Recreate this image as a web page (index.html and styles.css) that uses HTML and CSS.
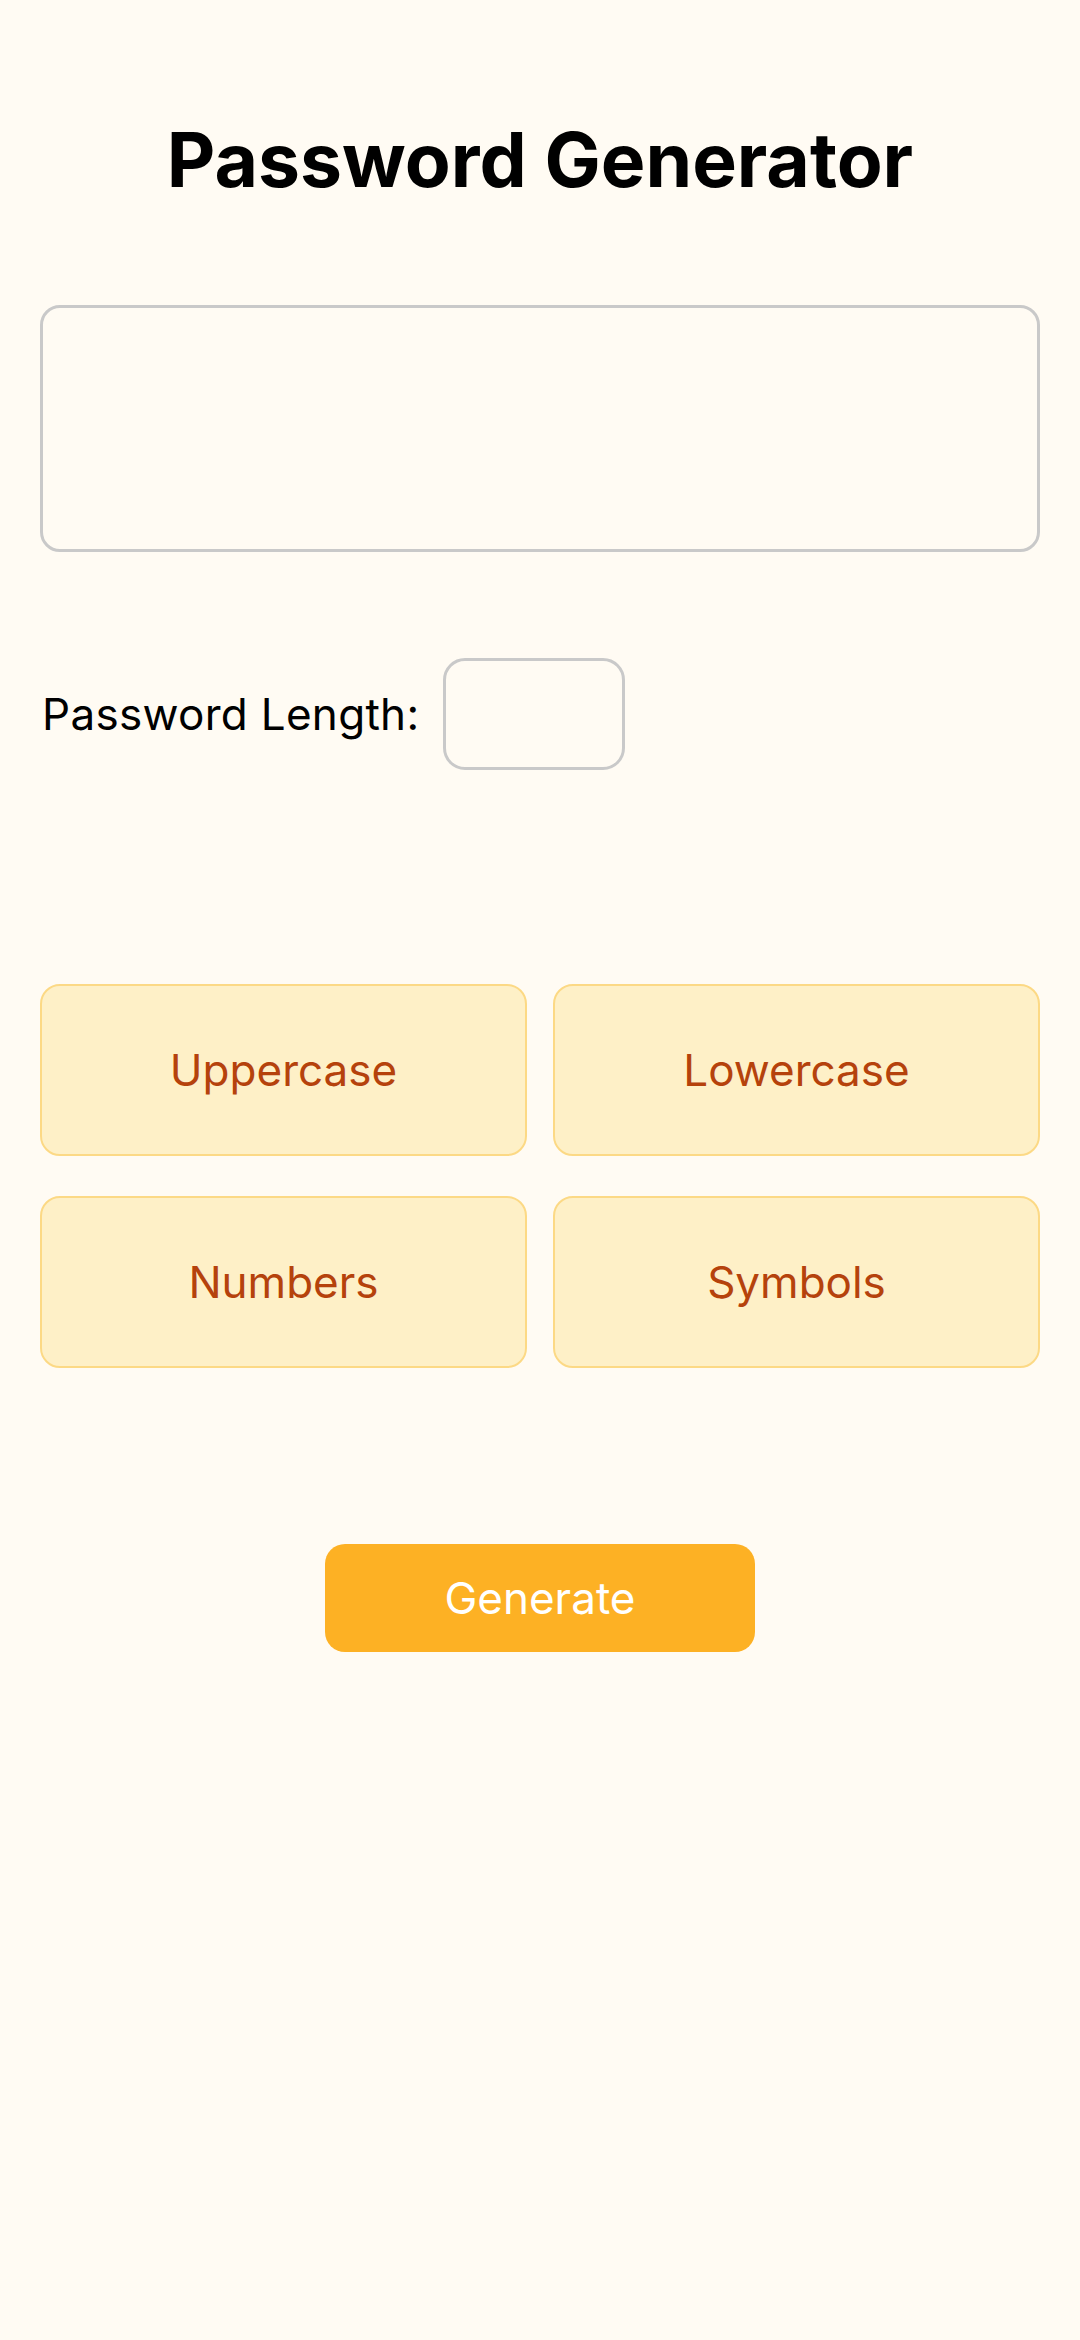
FILE: index.html
```html
<!DOCTYPE html>
<html lang="en">
<head>
<meta charset="utf-8">
<title>Password Generator</title>
<link rel="stylesheet" href="styles.css">
</head>
<body>
<main class="app">
  <h1 class="title">Password Generator</h1>
  <textarea class="output" readonly></textarea>
  <div class="length-row">
    <label class="length-label" for="len">Password Length:</label>
    <input class="length-input" id="len" type="text">
  </div>
  <div class="options">
    <button class="option">Uppercase</button>
    <button class="option">Lowercase</button>
    <button class="option">Numbers</button>
    <button class="option">Symbols</button>
  </div>
  <div class="actions">
    <button class="generate">Generate</button>
  </div>
</main>
</body>
</html>
```

FILE: styles.css
```css
html, body {
  margin: 0;
  padding: 0;
  background: #fffbf3;
}
body {
  font-family: Inter, "Noto Sans", Roboto, sans-serif;
  color: #000;
}
.app {
  padding: 0 40px;
  display: flex;
  flex-direction: column;
}
.title {
  margin: 115px 0 0;
  font-size: 75px;
  line-height: 90px;
  font-weight: 700;
  text-align: center;
  letter-spacing: 0;
}
.output {
  margin-top: 100px;
  height: 247px;
  box-sizing: border-box;
  width: 100%;
  border: 3px solid #c9c9c9;
  border-radius: 20px;
  background: transparent;
  resize: none;
  outline: none;
  font: inherit;
}
.length-row {
  margin-top: 106px;
  display: flex;
  align-items: center;
  gap: 24px;
}
.length-label {
  font-size: 44px;
  font-weight: 400;
  letter-spacing: 0.3px;
  padding-left: 2px;
}
.length-input {
  width: 182px;
  height: 112px;
  box-sizing: border-box;
  border: 3px solid #c9c9c9;
  border-radius: 22px;
  background: transparent;
  outline: none;
  font: inherit;
  font-size: 44px;
}
.options {
  margin-top: 214px;
  display: grid;
  grid-template-columns: 1fr 1fr;
  grid-auto-rows: 172px;
  column-gap: 26px;
  row-gap: 40px;
}
.option {
  background: #fef0c7;
  border: 2px solid #fcd985;
  border-radius: 20px;
  color: #b5420c;
  font-family: inherit;
  font-size: 44px;
  font-weight: 400;
}
.actions {
  margin-top: 176px;
  display: flex;
  justify-content: center;
}
.generate {
  width: 430px;
  height: 108px;
  background: #fdb124;
  border: none;
  border-radius: 20px;
  color: #fff;
  font-family: inherit;
  font-size: 44px;
  font-weight: 400;
}
```
